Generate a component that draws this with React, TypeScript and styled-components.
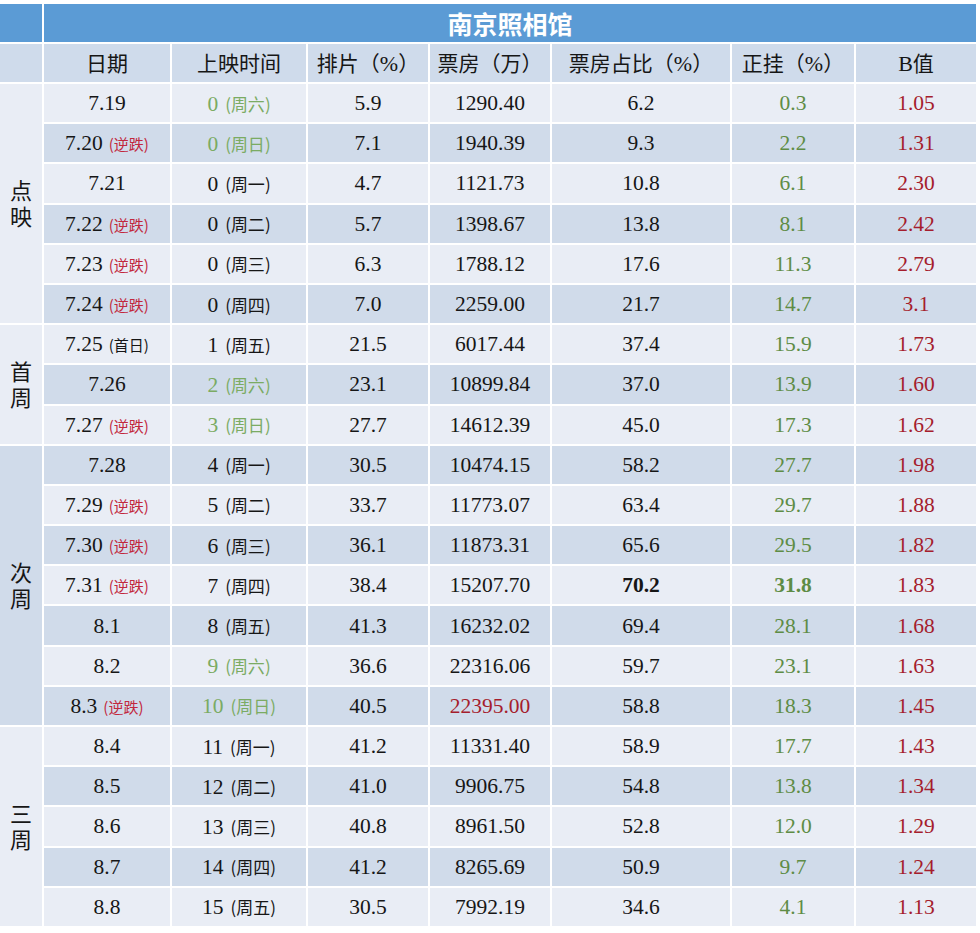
import * as React from "react";
import styled, { createGlobalStyle } from "styled-components";

const GlobalStyle = createGlobalStyle`
  body {
    margin: 0;
    background: #ffffff;
  }
`;

const colors = {
  blue: "#5b9bd5",
  head: "#cfdbeb",
  light: "#e9edf5",
  dark: "#d0dbea",
  text: "#161616",
  green: "#5e8c45",
  weekend: "#7bab63",
  red: "#a51d2d",
  note: "#c2283d",
};

const sans = `"Noto Sans CJK SC", "Noto Sans", sans-serif`;
const serif = `"Liberation Serif", "Noto Sans CJK SC", serif`;

type Tone = "light" | "dark";

type Row = {
  date: string;
  note?: string;
  noteDark?: boolean;
  day: string;
  week: string;
  weekend?: boolean;
  share: string;
  box: string;
  boxRed?: boolean;
  ratio: string;
  bold?: boolean;
  hold: string;
  b: string;
};

type Group = {
  label: string;
  tone: Tone;
  rows: Row[];
};

const groups: Group[] = [
  {
    label: "点映",
    tone: "light",
    rows: [
      { date: "7.19", day: "0", week: "周六", weekend: true, share: "5.9", box: "1290.40", ratio: "6.2", hold: "0.3", b: "1.05" },
      { date: "7.20", note: "逆跌", day: "0", week: "周日", weekend: true, share: "7.1", box: "1940.39", ratio: "9.3", hold: "2.2", b: "1.31" },
      { date: "7.21", day: "0", week: "周一", share: "4.7", box: "1121.73", ratio: "10.8", hold: "6.1", b: "2.30" },
      { date: "7.22", note: "逆跌", day: "0", week: "周二", share: "5.7", box: "1398.67", ratio: "13.8", hold: "8.1", b: "2.42" },
      { date: "7.23", note: "逆跌", day: "0", week: "周三", share: "6.3", box: "1788.12", ratio: "17.6", hold: "11.3", b: "2.79" },
      { date: "7.24", note: "逆跌", day: "0", week: "周四", share: "7.0", box: "2259.00", ratio: "21.7", hold: "14.7", b: "3.1" },
    ],
  },
  {
    label: "首周",
    tone: "light",
    rows: [
      { date: "7.25", note: "首日", noteDark: true, day: "1", week: "周五", share: "21.5", box: "6017.44", ratio: "37.4", hold: "15.9", b: "1.73" },
      { date: "7.26", day: "2", week: "周六", weekend: true, share: "23.1", box: "10899.84", ratio: "37.0", hold: "13.9", b: "1.60" },
      { date: "7.27", note: "逆跌", day: "3", week: "周日", weekend: true, share: "27.7", box: "14612.39", ratio: "45.0", hold: "17.3", b: "1.62" },
    ],
  },
  {
    label: "次周",
    tone: "dark",
    rows: [
      { date: "7.28", day: "4", week: "周一", share: "30.5", box: "10474.15", ratio: "58.2", hold: "27.7", b: "1.98" },
      { date: "7.29", note: "逆跌", day: "5", week: "周二", share: "33.7", box: "11773.07", ratio: "63.4", hold: "29.7", b: "1.88" },
      { date: "7.30", note: "逆跌", day: "6", week: "周三", share: "36.1", box: "11873.31", ratio: "65.6", hold: "29.5", b: "1.82" },
      { date: "7.31", note: "逆跌", day: "7", week: "周四", share: "38.4", box: "15207.70", ratio: "70.2", bold: true, hold: "31.8", b: "1.83" },
      { date: "8.1", day: "8", week: "周五", share: "41.3", box: "16232.02", ratio: "69.4", hold: "28.1", b: "1.68" },
      { date: "8.2", day: "9", week: "周六", weekend: true, share: "36.6", box: "22316.06", ratio: "59.7", hold: "23.1", b: "1.63" },
      { date: "8.3", note: "逆跌", day: "10", week: "周日", weekend: true, share: "40.5", box: "22395.00", boxRed: true, ratio: "58.8", hold: "18.3", b: "1.45" },
    ],
  },
  {
    label: "三周",
    tone: "light",
    rows: [
      { date: "8.4", day: "11", week: "周一", share: "41.2", box: "11331.40", ratio: "58.9", hold: "17.7", b: "1.43" },
      { date: "8.5", day: "12", week: "周二", share: "41.0", box: "9906.75", ratio: "54.8", hold: "13.8", b: "1.34" },
      { date: "8.6", day: "13", week: "周三", share: "40.8", box: "8961.50", ratio: "52.8", hold: "12.0", b: "1.29" },
      { date: "8.7", day: "14", week: "周四", share: "41.2", box: "8265.69", ratio: "50.9", hold: "9.7", b: "1.24" },
      { date: "8.8", day: "15", week: "周五", share: "30.5", box: "7992.19", ratio: "34.6", hold: "4.1", b: "1.13" },
    ],
  },
];

const Wrap = styled.div`
  padding-top: 4px;
`;

const Table = styled.table`
  width: 978px;
  table-layout: fixed;
  border-collapse: separate;
  border-spacing: 0;
  color: ${colors.text};
`;

const Cell = styled.td<{ $tone?: Tone }>`
  height: 40.2px;
  box-sizing: border-box;
  padding: 1px 0 0;
  border-right: 2px solid #ffffff;
  border-bottom: 2px solid #ffffff;
  background: ${(p) => (p.$tone === "dark" ? colors.dark : colors.light)};
  text-align: center;
  vertical-align: middle;
  font-family: ${serif};
  font-size: 21.5px;
  white-space: nowrap;
`;

const TitleCell = styled.th`
  height: 40px;
  box-sizing: border-box;
  padding: 0;
  border-right: 2px solid #ffffff;
  border-bottom: 2px solid #ffffff;
  background: ${colors.blue};
  color: #ffffff;
  font-family: ${sans};
  font-weight: 700;
  font-size: 25px;
  text-align: center;
`;

const HeadCell = styled.th`
  height: 40px;
  box-sizing: border-box;
  padding: 0 0 2px;
  border-right: 2px solid #ffffff;
  border-bottom: 2px solid #ffffff;
  background: ${colors.head};
  font-family: ${sans};
  font-weight: 400;
  font-size: 21px;
  text-align: center;
  white-space: nowrap;
`;

const SerifBit = styled.span`
  font-family: ${serif};
  font-size: 22px;
`;

const GroupCell = styled(Cell)`
  padding: 11px 0 0;
`;

const GroupLabel = styled.span`
  display: inline-block;
  writing-mode: vertical-rl;
  text-orientation: upright;
  font-family: ${sans};
  font-size: 22px;
  letter-spacing: 4px;
`;

const Note = styled.span<{ $dark?: boolean }>`
  margin-left: 6px;
  font-family: ${sans};
  font-size: 15px;
  color: ${(p) => (p.$dark ? colors.text : colors.note)};
`;

const Week = styled.span`
  margin-left: 7px;
  font-family: ${sans};
  font-size: 17px;
`;

const Value = styled.span<{ $color?: string; $bold?: boolean }>`
  color: ${(p) => p.$color || "inherit"};
  font-weight: ${(p) => (p.$bold ? 700 : 400)};
`;

const widths = [44, 128, 136, 122, 122, 180, 124, 122];

export default function App() {
  let index = 0;
  return (
    <Wrap>
      <GlobalStyle />
      <Table>
        <colgroup>
          {widths.map((w, i) => (
            <col key={i} style={{ width: w }} />
          ))}
        </colgroup>
        <thead>
          <tr>
            <TitleCell />
            <TitleCell colSpan={7}>南京照相馆</TitleCell>
          </tr>
          <tr>
            <HeadCell />
            <HeadCell>日期</HeadCell>
            <HeadCell>上映时间</HeadCell>
            <HeadCell>
              排片（<SerifBit>%</SerifBit>）
            </HeadCell>
            <HeadCell>票房（万）</HeadCell>
            <HeadCell>
              票房占比（<SerifBit>%</SerifBit>）
            </HeadCell>
            <HeadCell>
              正挂（<SerifBit>%</SerifBit>）
            </HeadCell>
            <HeadCell>
              <SerifBit>B</SerifBit>值
            </HeadCell>
          </tr>
        </thead>
        <tbody>
          {groups.map((g) =>
            g.rows.map((r, i) => {
              const tone: Tone = index++ % 2 === 0 ? "light" : "dark";
              const dayColor = r.weekend ? colors.weekend : undefined;
              return (
                <tr key={r.date}>
                  {i === 0 && (
                    <GroupCell $tone={g.tone} rowSpan={g.rows.length}>
                      <GroupLabel>{g.label}</GroupLabel>
                    </GroupCell>
                  )}
                  <Cell $tone={tone}>
                    {r.date}
                    {r.note && <Note $dark={r.noteDark}>({r.note})</Note>}
                  </Cell>
                  <Cell $tone={tone}>
                    <Value $color={dayColor}>
                      {r.day}
                      <Week>({r.week})</Week>
                    </Value>
                  </Cell>
                  <Cell $tone={tone}>{r.share}</Cell>
                  <Cell $tone={tone}>
                    <Value $color={r.boxRed ? colors.red : undefined}>{r.box}</Value>
                  </Cell>
                  <Cell $tone={tone}>
                    <Value $bold={r.bold}>{r.ratio}</Value>
                  </Cell>
                  <Cell $tone={tone}>
                    <Value $color={colors.green} $bold={r.bold}>
                      {r.hold}
                    </Value>
                  </Cell>
                  <Cell $tone={tone}>
                    <Value $color={colors.red}>{r.b}</Value>
                  </Cell>
                </tr>
              );
            })
          )}
        </tbody>
      </Table>
    </Wrap>
  );
}
